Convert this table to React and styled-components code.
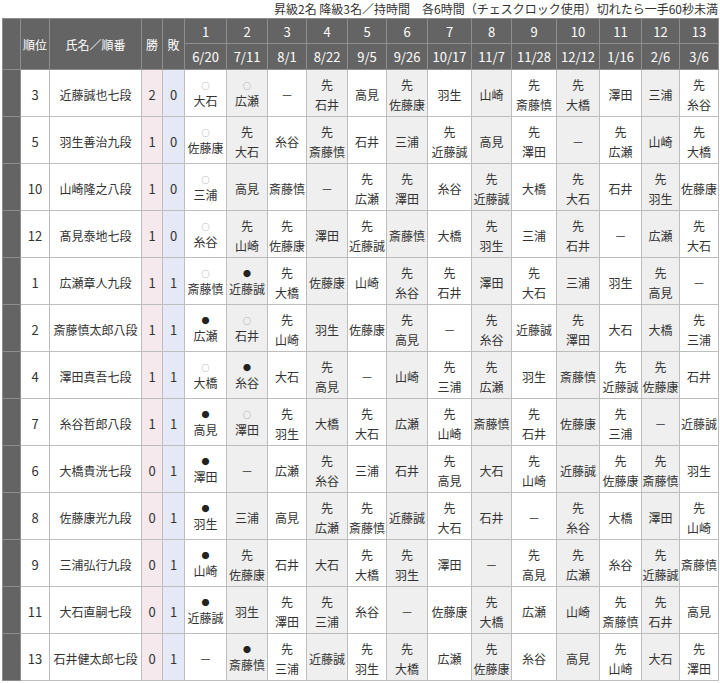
import styled, { createGlobalStyle } from 'styled-components'

const GlobalStyle = createGlobalStyle`
  body {
    margin: 0;
    background: #fff;
    font-family: "Noto Sans CJK JP", "Noto Sans", sans-serif;
    color: #333;
  }
`

const widths = [18, 29, 92, 21, 22, 42, 41, 39, 41, 39, 41, 44, 40, 45, 43, 42, 38, 39]
const dates = ['6/20', '7/11', '8/1', '8/22', '9/5', '9/26', '10/17', '11/7', '11/28', '12/12', '1/16', '2/6', '3/6']

const rows = [
  ['3', '近藤誠也七段', 2, 0, ['○大石', '○広瀬', '－', '先石井', '高見', '先佐藤康', '羽生', '山崎', '先斎藤慎', '先大橋', '澤田', '三浦', '先糸谷']],
  ['5', '羽生善治九段', 1, 0, ['○佐藤康', '先大石', '糸谷', '先斎藤慎', '石井', '三浦', '先近藤誠', '高見', '先澤田', '－', '先広瀬', '山崎', '先大橋']],
  ['10', '山崎隆之八段', 1, 0, ['○三浦', '高見', '斎藤慎', '－', '先広瀬', '先澤田', '糸谷', '先近藤誠', '大橋', '先大石', '石井', '先羽生', '佐藤康']],
  ['12', '髙見泰地七段', 1, 0, ['○糸谷', '先山崎', '先佐藤康', '澤田', '先近藤誠', '斎藤慎', '大橋', '先羽生', '三浦', '先石井', '－', '広瀬', '先大石']],
  ['1', '広瀬章人九段', 1, 1, ['○斎藤慎', '●近藤誠', '先大橋', '佐藤康', '山崎', '先糸谷', '先石井', '澤田', '先大石', '三浦', '羽生', '先高見', '－']],
  ['2', '斎藤慎太郎八段', 1, 1, ['●広瀬', '○石井', '先山崎', '羽生', '佐藤康', '先高見', '－', '先糸谷', '近藤誠', '先澤田', '大石', '大橋', '先三浦']],
  ['4', '澤田真吾七段', 1, 1, ['○大橋', '●糸谷', '大石', '先高見', '－', '山崎', '先三浦', '先広瀬', '羽生', '斎藤慎', '先近藤誠', '先佐藤康', '石井']],
  ['7', '糸谷哲郎八段', 1, 1, ['●高見', '○澤田', '先羽生', '大橋', '先大石', '広瀬', '先山崎', '斎藤慎', '先石井', '佐藤康', '先三浦', '－', '近藤誠']],
  ['6', '大橋貴洸七段', 0, 1, ['●澤田', '－', '広瀬', '先糸谷', '三浦', '石井', '先高見', '大石', '先山崎', '近藤誠', '先佐藤康', '先斎藤慎', '羽生']],
  ['8', '佐藤康光九段', 0, 1, ['●羽生', '三浦', '高見', '先広瀬', '先斎藤慎', '近藤誠', '先大石', '石井', '－', '先糸谷', '大橋', '澤田', '先山崎']],
  ['9', '三浦弘行九段', 0, 1, ['●山崎', '先佐藤康', '石井', '大石', '先大橋', '先羽生', '澤田', '－', '先高見', '先広瀬', '糸谷', '先近藤誠', '斎藤慎']],
  ['11', '大石直嗣七段', 0, 1, ['●近藤誠', '羽生', '先澤田', '先三浦', '糸谷', '－', '佐藤康', '先大橋', '広瀬', '山崎', '先斎藤慎', '先石井', '高見']],
  ['13', '石井健太郎七段', 0, 1, ['－', '●斎藤慎', '先三浦', '近藤誠', '先羽生', '先大橋', '広瀬', '先佐藤康', '糸谷', '高見', '先山崎', '大石', '先澤田']],
]

function GameCell({ value, even }) {
  const head = value[0]
  if (head === '○' || head === '●') {
    return (
      <Cell $bg={even ? '#efefef' : '#fff'}>
        <Mark $win={head === '○'}>{head}</Mark>
        <Line>{value.slice(1)}</Line>
      </Cell>
    )
  }
  if (head === '先') {
    return (
      <Cell $bg={even ? '#efefef' : '#fff'}>
        <Line>先</Line>
        <Line>{value.slice(1)}</Line>
      </Cell>
    )
  }
  return (
    <Cell $bg={even ? '#efefef' : '#fff'}>
      <Line>{value}</Line>
    </Cell>
  )
}

export default function App() {
  return (
    <Page>
      <GlobalStyle />
      <Caption>昇級2名 降級3名／持時間　各6時間（チェスクロック使用）切れたら一手60秒未満</Caption>
      <Table>
        <colgroup>
          {widths.map((w, i) => <col key={i} style={{ width: w }} />)}
        </colgroup>
        <thead>
          <TopRow>
            <Head rowSpan={2} />
            <Head rowSpan={2}>順位</Head>
            <Head rowSpan={2}>氏名／順番</Head>
            <Head rowSpan={2}>勝</Head>
            <Head rowSpan={2}>敗</Head>
            {dates.map((d, i) => <Head key={d} $num>{i + 1}</Head>)}
          </TopRow>
          <DateRow>
            {dates.map((d) => <Head key={d} $num>{d}</Head>)}
          </DateRow>
        </thead>
        <tbody>
          {rows.map(([rank, name, win, lose, games]) => (
            <Row key={name}>
              <Side />
              <Cell $num>{rank}</Cell>
              <Cell>{name}</Cell>
              <Cell $num $bg="#f6e9ed">{win}</Cell>
              <Cell $num $bg="#e5e8f5">{lose}</Cell>
              {games.map((g, i) => <GameCell key={i} value={g} even={i % 2 === 1} />)}
            </Row>
          ))}
        </tbody>
      </Table>
    </Page>
  )
}

const Page = styled.div`
  width: 716px;
  padding: 0 2px;
`

const Caption = styled.div`
  height: 18px;
  line-height: 18px;
  font-size: 12px;
  text-align: right;
  color: #333;
  white-space: nowrap;
`

const Table = styled.table`
  width: 716px;
  table-layout: fixed;
  border-collapse: collapse;
`

const TopRow = styled.tr`
  height: 25px;
`

const DateRow = styled.tr`
  height: 26px;
`

const Row = styled.tr`
  height: 47px;
`

const Head = styled.th`
  background: #646464;
  color: #fff;
  font-weight: normal;
  font-size: ${(p) => (p.$num ? '13px' : '12px')};
  border: 1px solid #8e8e8e;
  padding: 0;
  text-align: center;
  vertical-align: middle;
  white-space: nowrap;
`

const Side = styled.td`
  background: #646464;
  border: 1px solid #8e8e8e;
  padding: 0;
`

const Cell = styled.td`
  background: ${(p) => p.$bg || '#fff'};
  border: 1px solid #bdbdbd;
  padding: 4px 0 0;
  text-align: center;
  vertical-align: middle;
  font-size: ${(p) => (p.$num ? '13px' : '12px')};
  line-height: 20px;
  white-space: nowrap;
  overflow: hidden;
`

const Line = styled.span`
  display: block;
  line-height: 20px;
`

const Mark = styled.span`
  display: block;
  font-size: 8px;
  line-height: 11px;
  color: ${(p) => (p.$win ? '#808080' : '#222')};
`
